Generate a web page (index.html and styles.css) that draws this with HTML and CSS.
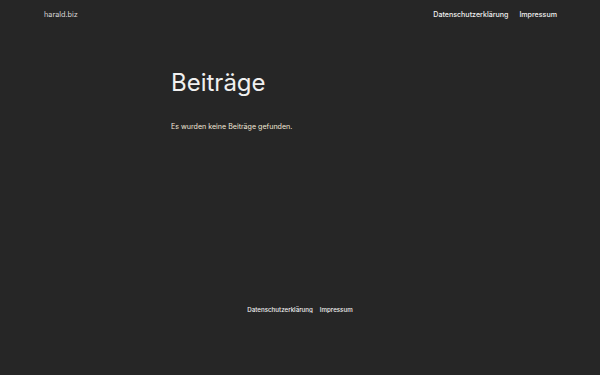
FILE: index.html
```html
<!DOCTYPE html>
<html lang="de">
<head>
    <meta charset="UTF-8">
    <meta name="viewport" content="width=device-width, initial-scale=1.0">
    <title>Beiträge – harald.biz</title>
    <link rel="stylesheet" href="styles.css">
</head>
<body>
    <header class="site-header">
        <a class="site-title" href="#">harald.biz</a>
        <nav class="nav">
            <a href="#">Datenschutzerklärung</a>
            <a href="#">Impressum</a>
        </nav>
    </header>

    <main class="content">
        <h1>Beiträge</h1>
        <p>Es wurden keine Beiträge gefunden.</p>
    </main>

    <footer class="site-footer">
        <nav class="nav">
            <a href="#">Datenschutzerklärung</a>
            <a href="#">Impressum</a>
        </nav>
    </footer>
</body>
</html>
```

FILE: styles.css
```css
body {
    margin: 0;
    background-color: #262626;
    color: #f0f0f0;
    font-family: Inter, "Noto Sans", sans-serif;
}
a {
    color: #f0f0f0;
    text-decoration: none;
}
.site-header {
    display: flex;
    justify-content: space-between;
    align-items: center;
    padding: 9px 43px 0 44px;
    height: 11px;
}
.site-title {
    font-size: 7.3px;
    color: #d8d8d8;
}
.nav {
    display: flex;
    gap: 11px;
    font-size: 7.1px;
    font-weight: 500;
}
.content {
    width: 258px;
    margin: 0 auto;
    padding-top: 48px;
    height: 238px;
}
.content h1 {
    margin: 0;
    font-size: 24px;
    font-weight: 400;
    line-height: 30px;
}
.content p {
    margin: 24px 0 0;
    font-size: 7.1px;
    color: #f2e8d8;
}
.site-footer {
    display: flex;
    justify-content: center;
}
.site-footer .nav {
    font-size: 6.2px;
    gap: 7px;
}
```
